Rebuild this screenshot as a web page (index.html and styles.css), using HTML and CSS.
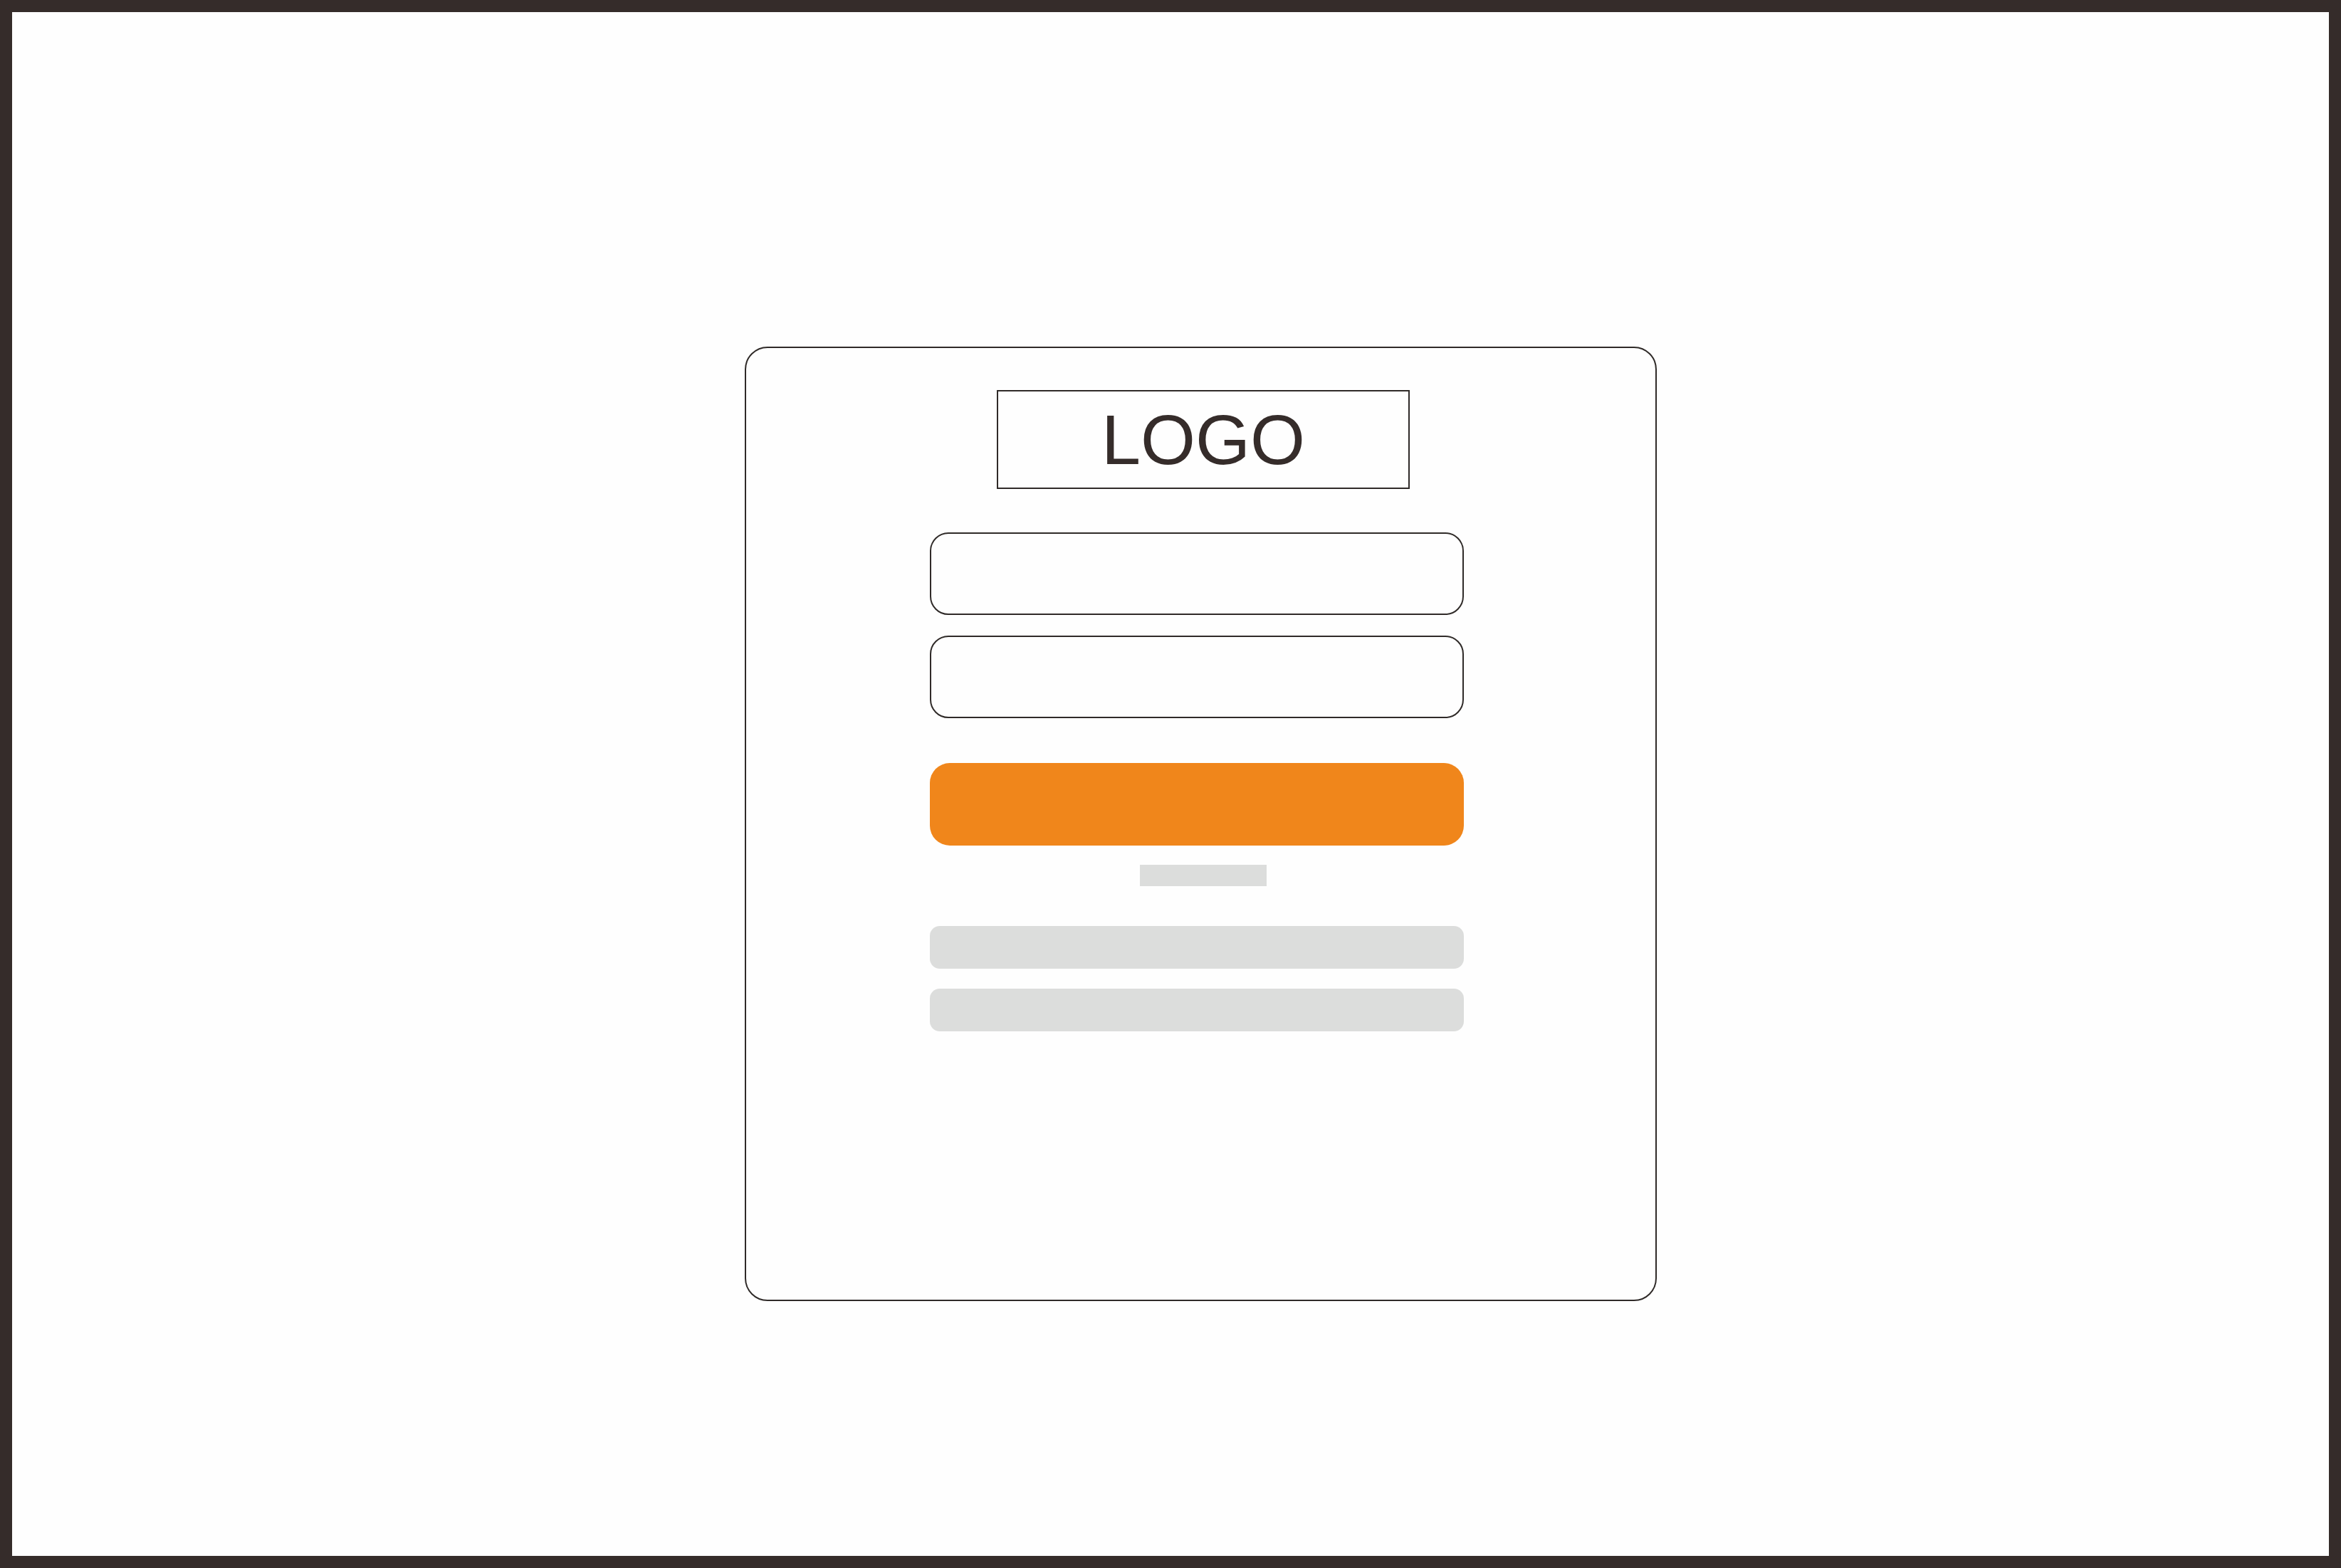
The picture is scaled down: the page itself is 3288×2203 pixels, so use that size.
FILE: index.html
```html
<!DOCTYPE html>
<html lang="en">
<head>
    <meta charset="UTF-8">
    <meta name="viewport" content="width=device-width, initial-scale=1.0">
    <title>Login Wireframe</title>
    <link rel="stylesheet" href="styles.css">
</head>
<body>
    <div class="frame">
        <div class="card">
            <div class="logo">LOGO</div>
            <input type="text" class="field field-first">
            <input type="password" class="field">
            <button class="submit"></button>
            <div class="link-stub"></div>
            <div class="social social-first"></div>
            <div class="social"></div>
        </div>
    </div>
</body>
</html>
```

FILE: styles.css
```css
html, body {
    margin: 0;
    padding: 0;
    background-color: #fefefe;
}
body {
    font-family: "Liberation Sans", Arial, sans-serif;
    color: #352c2a;
}
.frame {
    width: 3288px;
    height: 2203px;
    border: 17px solid #352c2a;
    padding: 470px 0 0 1029px;
    box-sizing: border-box;
    background-color: #fefefe;
}
.card {
    width: 1281px;
    height: 1341px;
    border: 2px solid #2f2a28;
    border-radius: 32px;
    padding: 59px 0 0 258px;
    box-sizing: border-box;
    display: flex;
    flex-direction: column;
    align-items: flex-start;
}
.logo {
    width: 580px;
    height: 139px;
    margin-left: 94px;
    border: 2px solid #2f2a28;
    box-sizing: border-box;
    display: flex;
    align-items: center;
    justify-content: center;
    font-size: 99px;
    line-height: 1;
    color: #352c2a;
}
.field {
    display: block;
    width: 750px;
    height: 116px;
    margin: 29px 0 0 0;
    padding: 0;
    border: 2px solid #2f2a28;
    border-radius: 26px;
    background-color: #fefefe;
    box-sizing: border-box;
    outline: none;
}
.field-first {
    margin-top: 61px;
}
.submit {
    display: block;
    width: 750px;
    height: 116px;
    margin-top: 63px;
    padding: 0;
    border: none;
    border-radius: 28px;
    background-color: #f0861b;
    cursor: pointer;
}
.link-stub {
    width: 178px;
    height: 30px;
    margin: 27px 0 0 295px;
    background-color: #dcdddc;
}
.social {
    width: 750px;
    height: 60px;
    margin-top: 28px;
    border-radius: 14px;
    background-color: #dcdddc;
}
.social-first {
    margin-top: 56px;
}
```
